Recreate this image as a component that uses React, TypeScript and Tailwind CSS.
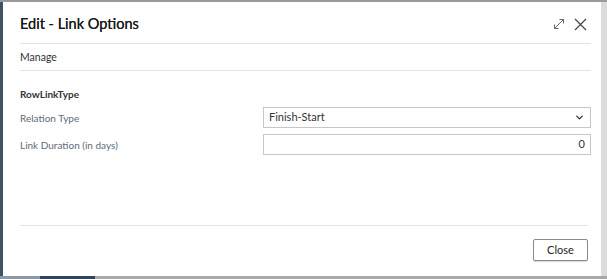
import { ChevronDown } from 'lucide-react';

export default function App() {
    return (
        <div className="w-[607px] h-[279px] bg-[#c9c9c9] flex flex-col overflow-hidden" style={{ fontFamily: 'Lato, "Open Sans", sans-serif' }}>
            <div className="h-[2px] bg-[#9a9a9a]" />
            <div className="flex flex-1">
                <div className="w-[3px] bg-[#3e5366]" />
                {/* Dialog */}
                <div className="flex-1 bg-white flex flex-col pl-[17px] pr-[10px] text-[#333]">
                    <div className="h-[42px] flex items-center justify-between border-b border-[#e1e1e1] pt-[3px]">
                        <h1 className="text-[14.5px] text-[#1a1a1a] [text-shadow:0_0_0.4px_#1a1a1a]">Edit - Link Options</h1>
                        <div className="flex items-center gap-[9px] pr-[4px] text-[#555]">
                            <svg width="12" height="12" viewBox="0 0 12 12" fill="none" stroke="#666" strokeWidth="1">
                                <path d="M1.5 10.5 L10.5 1.5 M6.5 1.5 H10.5 V5.5 M1.5 6.5 V10.5 H5.5" />
                            </svg>
                            <svg width="13" height="13" viewBox="0 0 13 13" fill="none" stroke="#444" strokeWidth="1.2">
                                <path d="M1 1 L12 12 M12 1 L1 12" />
                            </svg>
                        </div>
                    </div>
                    <div className="h-[27px] flex items-center border-b border-[#e1e1e1] text-[10.5px] pt-[1px]">Manage</div>

                    <div className="pt-[15px] flex flex-col">
                        <div className="text-[10px] font-bold text-[#333] h-[16px] leading-[16px]">RowLinkType</div>
                        <div className="mt-[5px] flex items-center h-[21px]">
                            <span className="w-[243px] text-[10px] pt-[1px] text-[#5e6b7a]">Relation Type</span>
                            <div className="flex-1 h-[21px] border border-[#c6c6c6] flex items-center justify-between pl-[5px] pr-[5px] text-[11px] text-[#333]">
                                <span>Finish-Start</span>
                                <ChevronDown className="w-[11px] h-[11px]" strokeWidth={3} color="#333" />
                            </div>
                        </div>
                        <div className="mt-[6px] flex items-center h-[21px]">
                            <span className="w-[243px] text-[10px] pt-[1px] text-[#5e6b7a]">Link Duration (in days)</span>
                            <div className="flex-1 h-[21px] border border-[#c6c6c6] flex items-center justify-end pr-[5px] text-[11px] text-[#333]">
                                <span>0</span>
                            </div>
                        </div>
                    </div>

                    <div className="flex-1" />
                    <div className="border-t border-[#e1e1e1] mr-[3px] h-[51px] flex items-center justify-end pb-[2px]">
                        <button className="w-[55px] h-[22px] border border-[#8a8a8a] rounded-[2px] text-[11px] text-[#222] bg-white shadow-[0_1px_1px_rgba(0,0,0,0.15)]">Close</button>
                    </div>
                </div>
                <div className="w-[6px] bg-[#dcdcdc]" />
            </div>
            <div className="h-[3px] flex">
                <div className="w-[40px] bg-[#8a98a8]" />
                <div className="flex-none w-[55px] bg-[#2e4560]" />
                <div className="flex-1 bg-[#a8a8a8]" />
            </div>
        </div>
    );
}
